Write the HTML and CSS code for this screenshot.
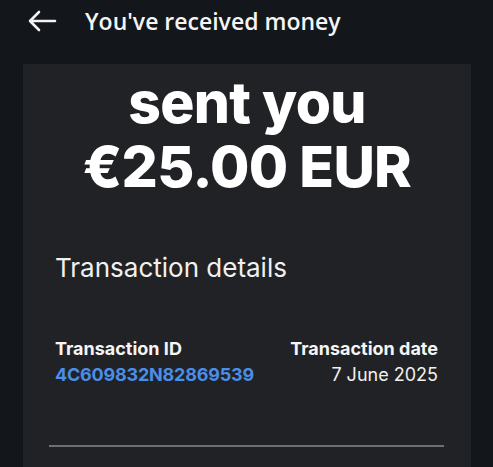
FILE: index.html
```html
<!DOCTYPE html>
<html>
<head>
<meta charset="utf-8">
<link rel="stylesheet" href="styles.css">
</head>
<body>
<header class="topbar">
  <svg class="back" width="30" height="22" viewBox="0 0 30 22" aria-hidden="true">
    <path d="M28 11H3M12 2L3 11L12 20" fill="none" stroke="#f2f2f2" stroke-width="2.6" stroke-linecap="round" stroke-linejoin="round"/>
  </svg>
  <h1 class="title">You've received money</h1>
</header>
<main class="card">
  <div class="hero">
    <div class="hero-line">sent you</div>
    <div class="hero-line">€25.00 EUR</div>
  </div>
  <h2 class="section">Transaction details</h2>
  <div class="details">
    <div class="col">
      <div class="label">Transaction ID</div>
      <div class="value link">4C609832N82869539</div>
    </div>
    <div class="col right">
      <div class="label">Transaction date</div>
      <div class="value">7 June 2025</div>
    </div>
  </div>
  <hr class="divider">
</main>
</body>
</html>
```
FILE: styles.css
```css
html, body {
  margin: 0;
  padding: 0;
  background: #13161a;
  height: 100%;
  overflow: hidden;
}
body {
  font-family: "Open Sans", sans-serif;
  color: #f5f5f5;
}
.topbar {
  display: flex;
  align-items: center;
  height: 42px;
  padding: 0 0 0 27px;
  gap: 28px;
}
.back {
  display: block;
}
.title {
  margin: 0;
  font-family: "Open Sans", sans-serif;
  font-weight: 600;
  font-size: 23px;
  color: #f5f5f5;
}
.card {
  margin: 22px 22px 0 23px;
  background: #212226;
  height: 403px;
  box-sizing: border-box;
  padding: 7px 32px 0 32px;
}
.hero {
  text-align: center;
  font-family: "Inter", sans-serif;
  font-weight: 800;
  font-size: 57px;
  line-height: 64px;
  color: #ffffff;
  letter-spacing: -0.7px;
}
.section {
  margin: 53px 0 0 0;
  font-family: "Inter", sans-serif;
  font-weight: 400;
  font-size: 26px;
  color: #f0f0f0;
}
.details {
  display: flex;
  justify-content: space-between;
  margin-top: 53px;
  padding-right: 1px;
}
.col.right {
  text-align: right;
}
.label {
  font-family: "Inter", sans-serif;
  font-weight: 700;
  font-size: 18px;
  line-height: 26px;
  color: #f5f5f5;
}
.value {
  font-family: "Inter", sans-serif;
  font-weight: 400;
  font-size: 18px;
  line-height: 26px;
  color: #f0f0f0;
}
.value.link {
  color: #4a8ee6;
  font-weight: 700;
  letter-spacing: -0.2px;
}
.divider {
  margin: 57px -5px 0 -6px;
  border: 0;
  height: 2px;
  background: #6e6f72;
}
```
